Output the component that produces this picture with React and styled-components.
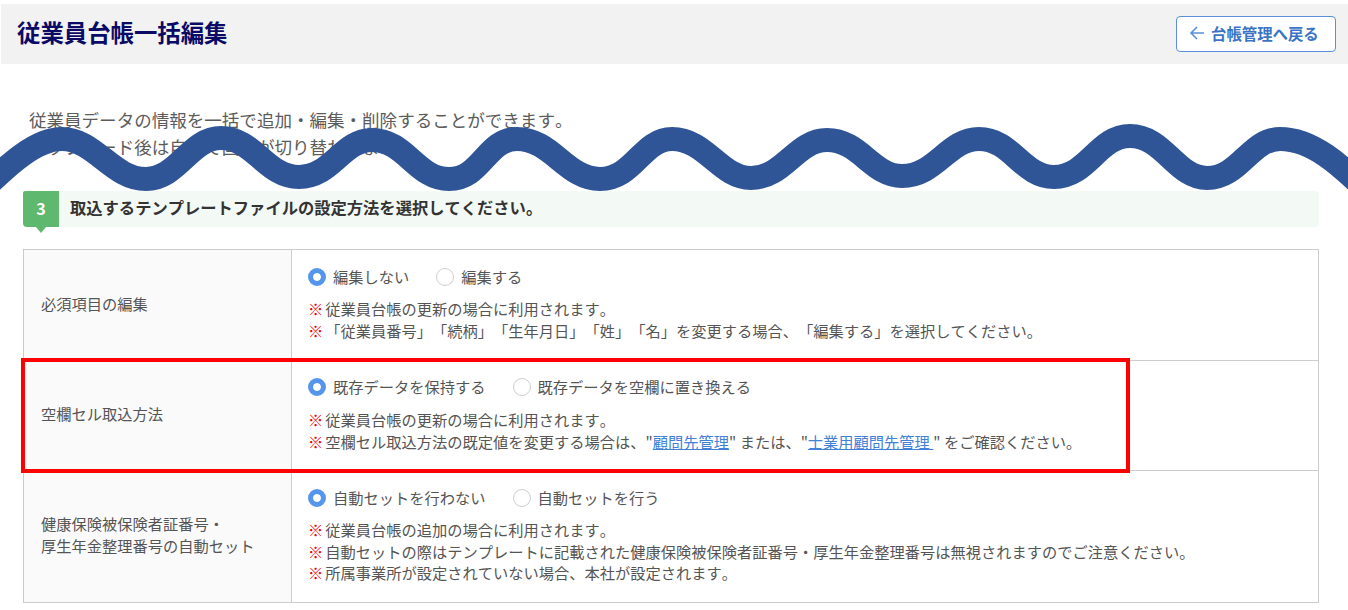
import React from 'react';
import styled, { createGlobalStyle } from 'styled-components';

const GlobalStyle = createGlobalStyle`
  html, body {
    margin: 0;
    padding: 0;
    background: #ffffff;
    overflow: hidden;
  }
  body {
    font-family: 'Noto Sans CJK JP', 'Noto Sans', sans-serif;
    color: #555555;
    text-spacing-trim: space-all;
    font-kerning: none;
  }
`;

const Page = styled.div`
  position: relative;
  width: 1348px;
  height: 610px;
  padding-top: 4px;
  box-sizing: border-box;
  overflow: hidden;
`;

const Header = styled.header`
  height: 60px;
  margin-left: 1px;
  padding: 0 12px 0 16px;
  background-color: #f2f2f2;
  display: flex;
  align-items: center;
  justify-content: space-between;
`;

const Title = styled.h1`
  margin: 0;
  padding-bottom: 3px;
  font-size: 23.4px;
  font-weight: 700;
  line-height: 1;
  color: #0b0b66;
`;

const BackButton = styled.button`
  width: 160px;
  height: 36px;
  padding: 0 0 3px 12px;
  background: #ffffff;
  border: 1px solid #5b8fd9;
  border-radius: 4px;
  color: #3b74c4;
  font-family: inherit;
  font-size: 15.4px;
  font-weight: 700;
  display: flex;
  align-items: center;
  gap: 6px;
`;

const Intro = styled.div`
  padding: 42px 0 0 29px;
  height: 85px;
  font-size: 17.55px;
  line-height: 27px;
  font-weight: 400;
  color: #5c5c5c;
  p {
    margin: 0;
  }
`;

const Wave = styled.svg`
  position: absolute;
  left: 0;
  top: 110px;
  pointer-events: none;
`;

const Content = styled.div`
  padding: 0 29px 0 23px;
`;

const StepBar = styled.div`
  height: 36px;
  background-color: #f3f9f4;
  border-radius: 4px;
  display: flex;
  align-items: center;
  gap: 11px;
`;

const StepTag = styled.div`
  position: relative;
  width: 36px;
  height: 36px;
  padding-bottom: 2px;
  box-sizing: border-box;
  background-color: #5eb96f;
  border-radius: 2px 0 0 4px;
  color: #ffffff;
  font-size: 16px;
  font-weight: 700;
  display: flex;
  align-items: center;
  justify-content: center;
  &::after {
    content: '';
    position: absolute;
    left: 13px;
    top: 36px;
    border-left: 5px solid transparent;
    border-right: 5px solid transparent;
    border-top: 6px solid #5eb96f;
  }
`;

const StepText = styled.span`
  font-size: 16.3px;
  font-weight: 700;
  color: #333333;
  line-height: 1;
  margin-bottom: 4px;
`;

const Table = styled.div`
  margin-top: 22px;
  border: 1px solid #cccccc;
`;

const Row = styled.div`
  position: relative;
  display: grid;
  grid-template-columns: 268px 1fr;
  height: ${(p) => p.$height}px;
  box-sizing: border-box;
  & + & {
    border-top: 1px solid #cccccc;
  }
`;

const Label = styled.div`
  background-color: #fafafa;
  border-right: 1px solid #cccccc;
  padding: 0 0 5px 17px;
  display: flex;
  align-items: center;
  font-size: 15.25px;
  line-height: 22px;
  color: #555555;
`;

const Body = styled.div`
  padding: ${(p) => p.$top}px 0 0 16px;
`;

const RadioGroup = styled.div`
  display: flex;
  align-items: center;
  height: 24px;
  gap: 27px;
`;

const RadioItem = styled.label`
  display: flex;
  align-items: center;
  gap: 7px;
  font-size: 15.25px;
  color: #555555;
`;

const RadioText = styled.span`
  margin-top: -2px;
`;

const RadioMark = styled.span`
  width: 18px;
  height: 18px;
  box-sizing: border-box;
  border-radius: 50%;
  background: ${(p) => (p.$checked ? '#5596ec' : '#ffffff')};
  border: ${(p) => (p.$checked ? '5px solid #5596ec' : '1px solid #cfcfcf')};
  box-shadow: ${(p) => (p.$checked ? 'inset 0 0 0 4px #ffffff' : 'none')};
`;

const Notes = styled.div`
  margin-top: ${(p) => p.$top}px;
`;

const Note = styled.div`
  font-size: 15.25px;
  line-height: 21.5px;
  color: #555555;
  white-space: pre;
  &::before {
    content: '※';
    margin-right: 2px;
    color: #f00000;
    font-weight: 700;
  }
`;

const TextLink = styled.a`
  color: #4182d8;
  text-decoration: underline;
`;

const Highlight = styled.div`
  position: absolute;
  z-index: 1;
  left: -3px;
  top: -3px;
  width: 1109px;
  height: 115px;
  box-sizing: border-box;
  border: 4px solid #ff0000;
  pointer-events: none;
`;

function RadioSet({ options }) {
  return (
    <RadioGroup>
      {options.map((text, i) => (
        <RadioItem key={text}>
          <RadioMark $checked={i === 0} />
          <RadioText>{text}</RadioText>
        </RadioItem>
      ))}
    </RadioGroup>
  );
}

export default function App() {
  return (
    <Page>
      <GlobalStyle />
      <Header>
        <Title>従業員台帳一括編集</Title>
        <BackButton>
          <svg width="16" height="16" viewBox="0 0 16 16" fill="none" stroke="#5b8fd9" strokeWidth="1.6">
            <path d="M15 8H2M8 2L2 8L8 14" />
          </svg>
          台帳管理へ戻る
        </BackButton>
      </Header>
      <Intro>
        <p>従業員データの情報を一括で追加・編集・削除することができます。</p>
        <p>アップロード後は自動で画面が切り替わります。</p>
      </Intro>
      <Wave width="1348" height="90" viewBox="0 110 1348 90">
        <path
          d="M-24 196 C-4 178 30 139 62 139 C95 139 112 179 146 179 C178 179 190 138 221 138 C254 138 266 177 299 177 C332 177 342 140 372 140 C406 140 416 179 449 179 C482 179 486 139 517 139 C552 139 566 179 600 179 C634 179 642 139 672 139 C706 139 720 178 751 178 C784 178 796 140 827 140 C860 140 872 176 902 176 C936 176 948 139 979 139 C1012 139 1022 177 1054 177 C1088 177 1098 136 1130 136 C1164 136 1176 178 1207 178 C1240 178 1250 139 1280 139 C1312 139 1340 164 1372 196"
          fill="none"
          stroke="#305597"
          strokeWidth="24"
        />
      </Wave>
      <Content>
        <StepBar>
          <StepTag>3</StepTag>
          <StepText>取込するテンプレートファイルの設定方法を選択してください。</StepText>
        </StepBar>
        <Table>
          <Row $height={110}>
            <Label>必須項目の編集</Label>
            <Body $top={15}>
              <RadioSet options={['編集しない', '編集する']} />
              <Notes $top={9}>
                <Note>従業員台帳の更新の場合に利用されます。</Note>
                <Note>「従業員番号」「続柄」「生年月日」「姓」「名」を変更する場合、「編集する」を選択してください。</Note>
              </Notes>
            </Body>
          </Row>
          <Row $height={110}>
            <Label>空欄セル取込方法</Label>
            <Body $top={14}>
              <RadioSet options={['既存データを保持する', '既存データを空欄に置き換える']} />
              <Notes $top={10}>
                <Note>従業員台帳の更新の場合に利用されます。</Note>
                <Note>
                  {'空欄セル取込方法の既定値を変更する場合は、"'}
                  <TextLink>顧問先管理</TextLink>
                  {'" または、"'}
                  <TextLink>士業用顧問先管理 </TextLink>
                  {'" をご確認ください。'}
                </Note>
              </Notes>
            </Body>
            <Highlight />
          </Row>
          <Row $height={132}>
            <Label>
              健康保険被保険者証番号・
              <br />
              厚生年金整理番号の自動セット
            </Label>
            <Body $top={15}>
              <RadioSet options={['自動セットを行わない', '自動セットを行う']} />
              <Notes $top={9}>
                <Note>従業員台帳の追加の場合に利用されます。</Note>
                <Note>自動セットの際はテンプレートに記載された健康保険被保険者証番号・厚生年金整理番号は無視されますのでご注意ください。</Note>
                <Note>所属事業所が設定されていない場合、本社が設定されます。</Note>
              </Notes>
            </Body>
          </Row>
        </Table>
      </Content>
    </Page>
  );
}
